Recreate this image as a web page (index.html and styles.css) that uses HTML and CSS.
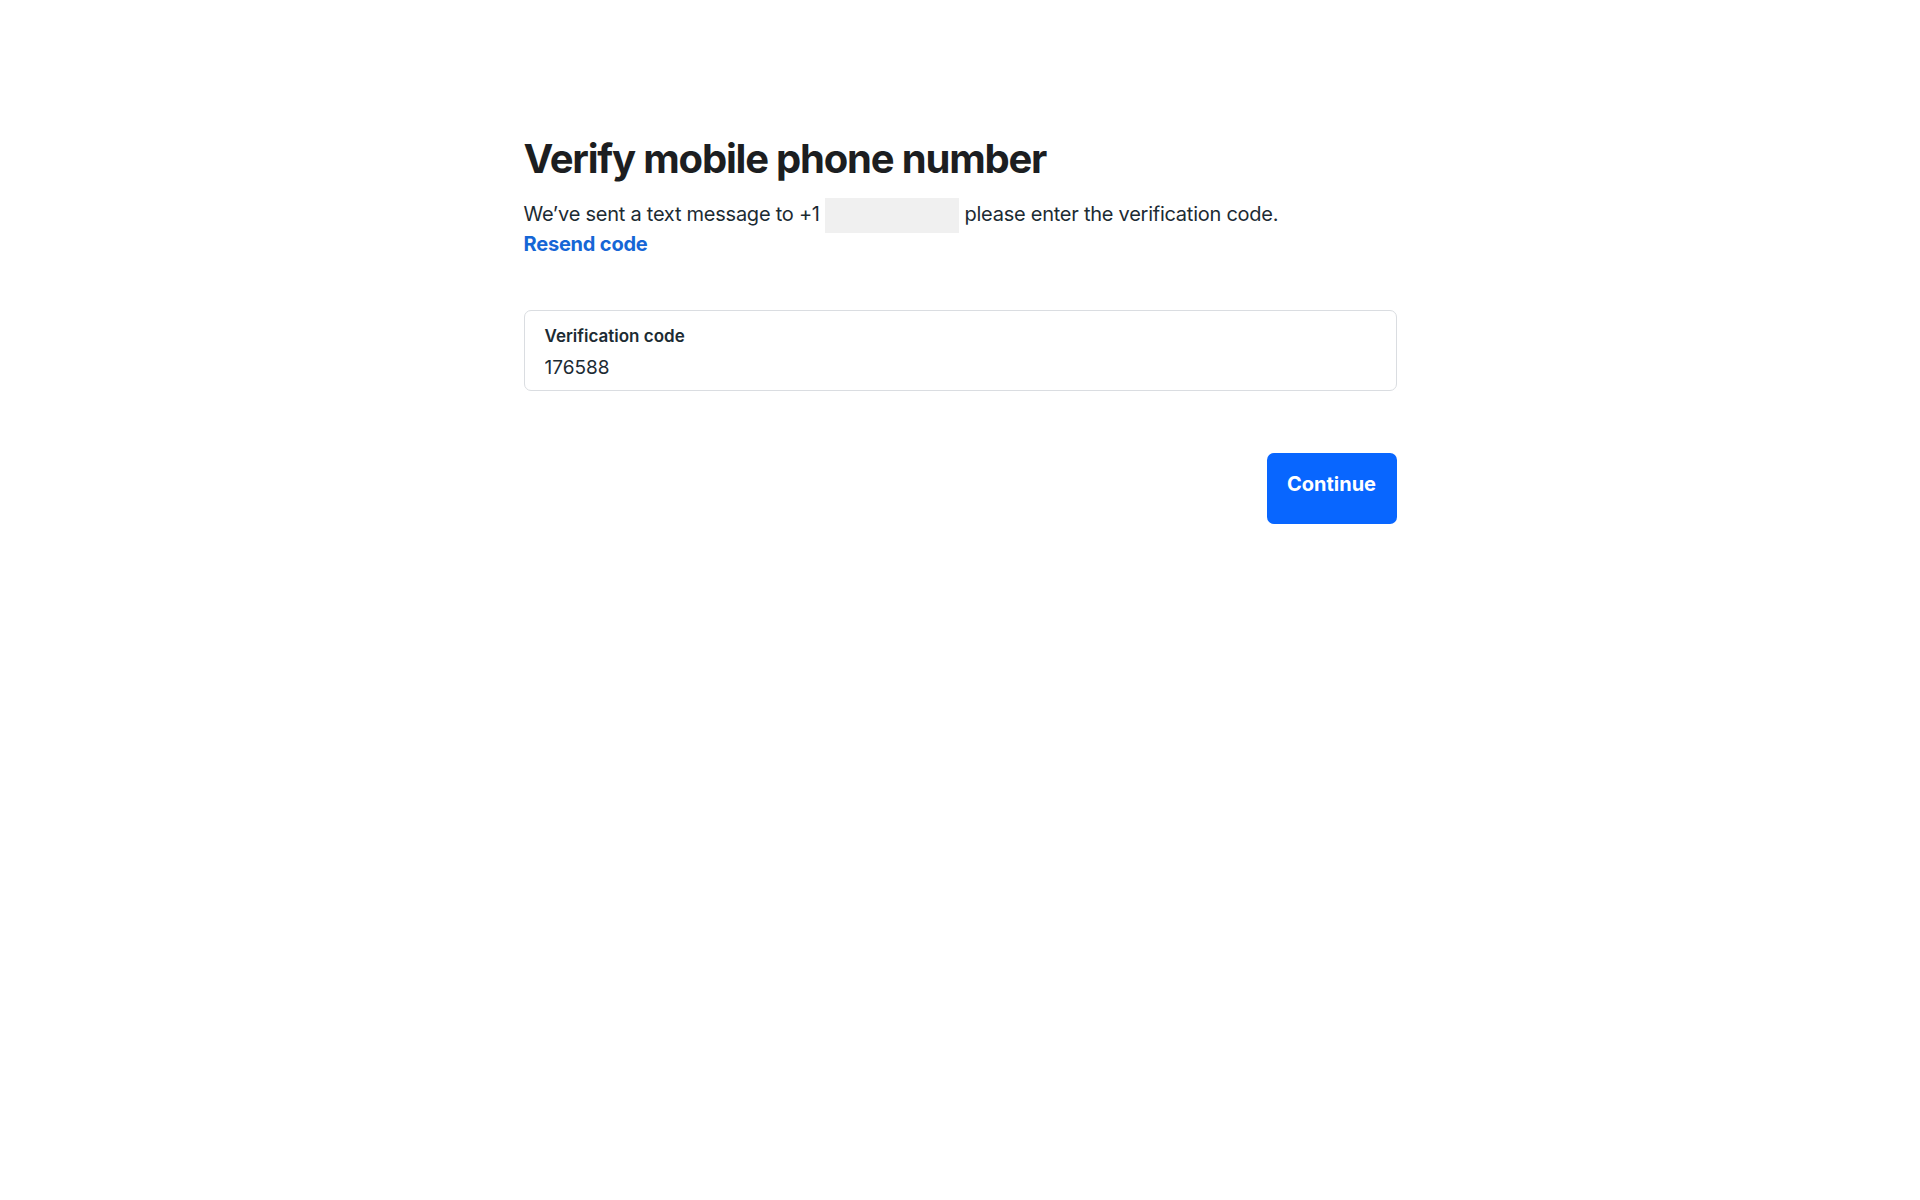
FILE: index.html
```html
<!DOCTYPE html>
<html lang="en">
<head>
  <meta charset="UTF-8">
  <meta name="viewport" content="width=device-width, initial-scale=1.0">
  <title>Verify mobile phone number</title>
  <link rel="stylesheet" href="styles.css">
</head>
<body>

  <div class="verify">
    <h1>Verify mobile phone number</h1>

    <p class="intro">
      We’ve sent a text message to +1 <span class="phone-mask"></span> please enter the verification code.
    </p>
    <a href="#" class="resend">Resend code</a>

    <!-- поле с кодом -->
    <label class="code-field" for="code">
      <span class="code-label">Verification code</span>
      <input type="text" id="code" value="176588">
    </label>

    <div class="actions">
      <button type="button" class="continue">Continue</button>
    </div>
  </div>

</body>
</html>
```

FILE: styles.css
```css
body {
  background-color: #FFF;
  font-family: Inter, "Noto Sans", sans-serif;
  margin: 0;
  padding: 0;
  color: #1c1e21;
}

.verify {
  width: 873px;
  margin: 0 auto;
  padding-top: 135px;
}

h1 {
  font-size: 40px;
  font-weight: 700;
  letter-spacing: -1.2px;
  line-height: 48px;
  margin: 0 0 16px;
}

.intro {
  font-size: 20px;
  line-height: 30px;
  letter-spacing: -0.25px;
  margin: 0;
  color: #1c2b33;
}

.phone-mask {
  display: inline-block;
  width: 134px;
  height: 35px;
  margin: -4px 0;
  background-color: #F0F0F0;
  vertical-align: middle;
}

.resend {
  display: inline-block;
  font-size: 20px;
  font-weight: 700;
  line-height: 30px;
  letter-spacing: -0.2px;
  color: #1566d6;
  text-decoration: none;
}

.code-field {
  display: flex;
  flex-direction: column;
  margin-top: 51px;
  height: 81px;
  box-sizing: border-box;
  padding: 14px 20px 0;
  border: 1px solid #DADDE1;
  border-radius: 7px;
}

.code-label {
  font-size: 17px;
  font-weight: 600;
  line-height: 22px;
  color: #1c2b33;
}

.code-field input {
  border: none;
  outline: none;
  padding: 0;
  margin-top: 9px;
  font-family: inherit;
  font-size: 19px;
  line-height: 24px;
  color: #1c2b33;
  background: transparent;
}

.actions {
  display: flex;
  justify-content: flex-end;
  margin-top: 62px;
}

.continue {
  background-color: #0866FF;
  color: #FFF;
  border: none;
  border-radius: 7px;
  width: 130px;
  height: 71px;
  padding: 0 0 10px;
  font-family: inherit;
  font-size: 20px;
  font-weight: 700;
  cursor: pointer;
}
```
